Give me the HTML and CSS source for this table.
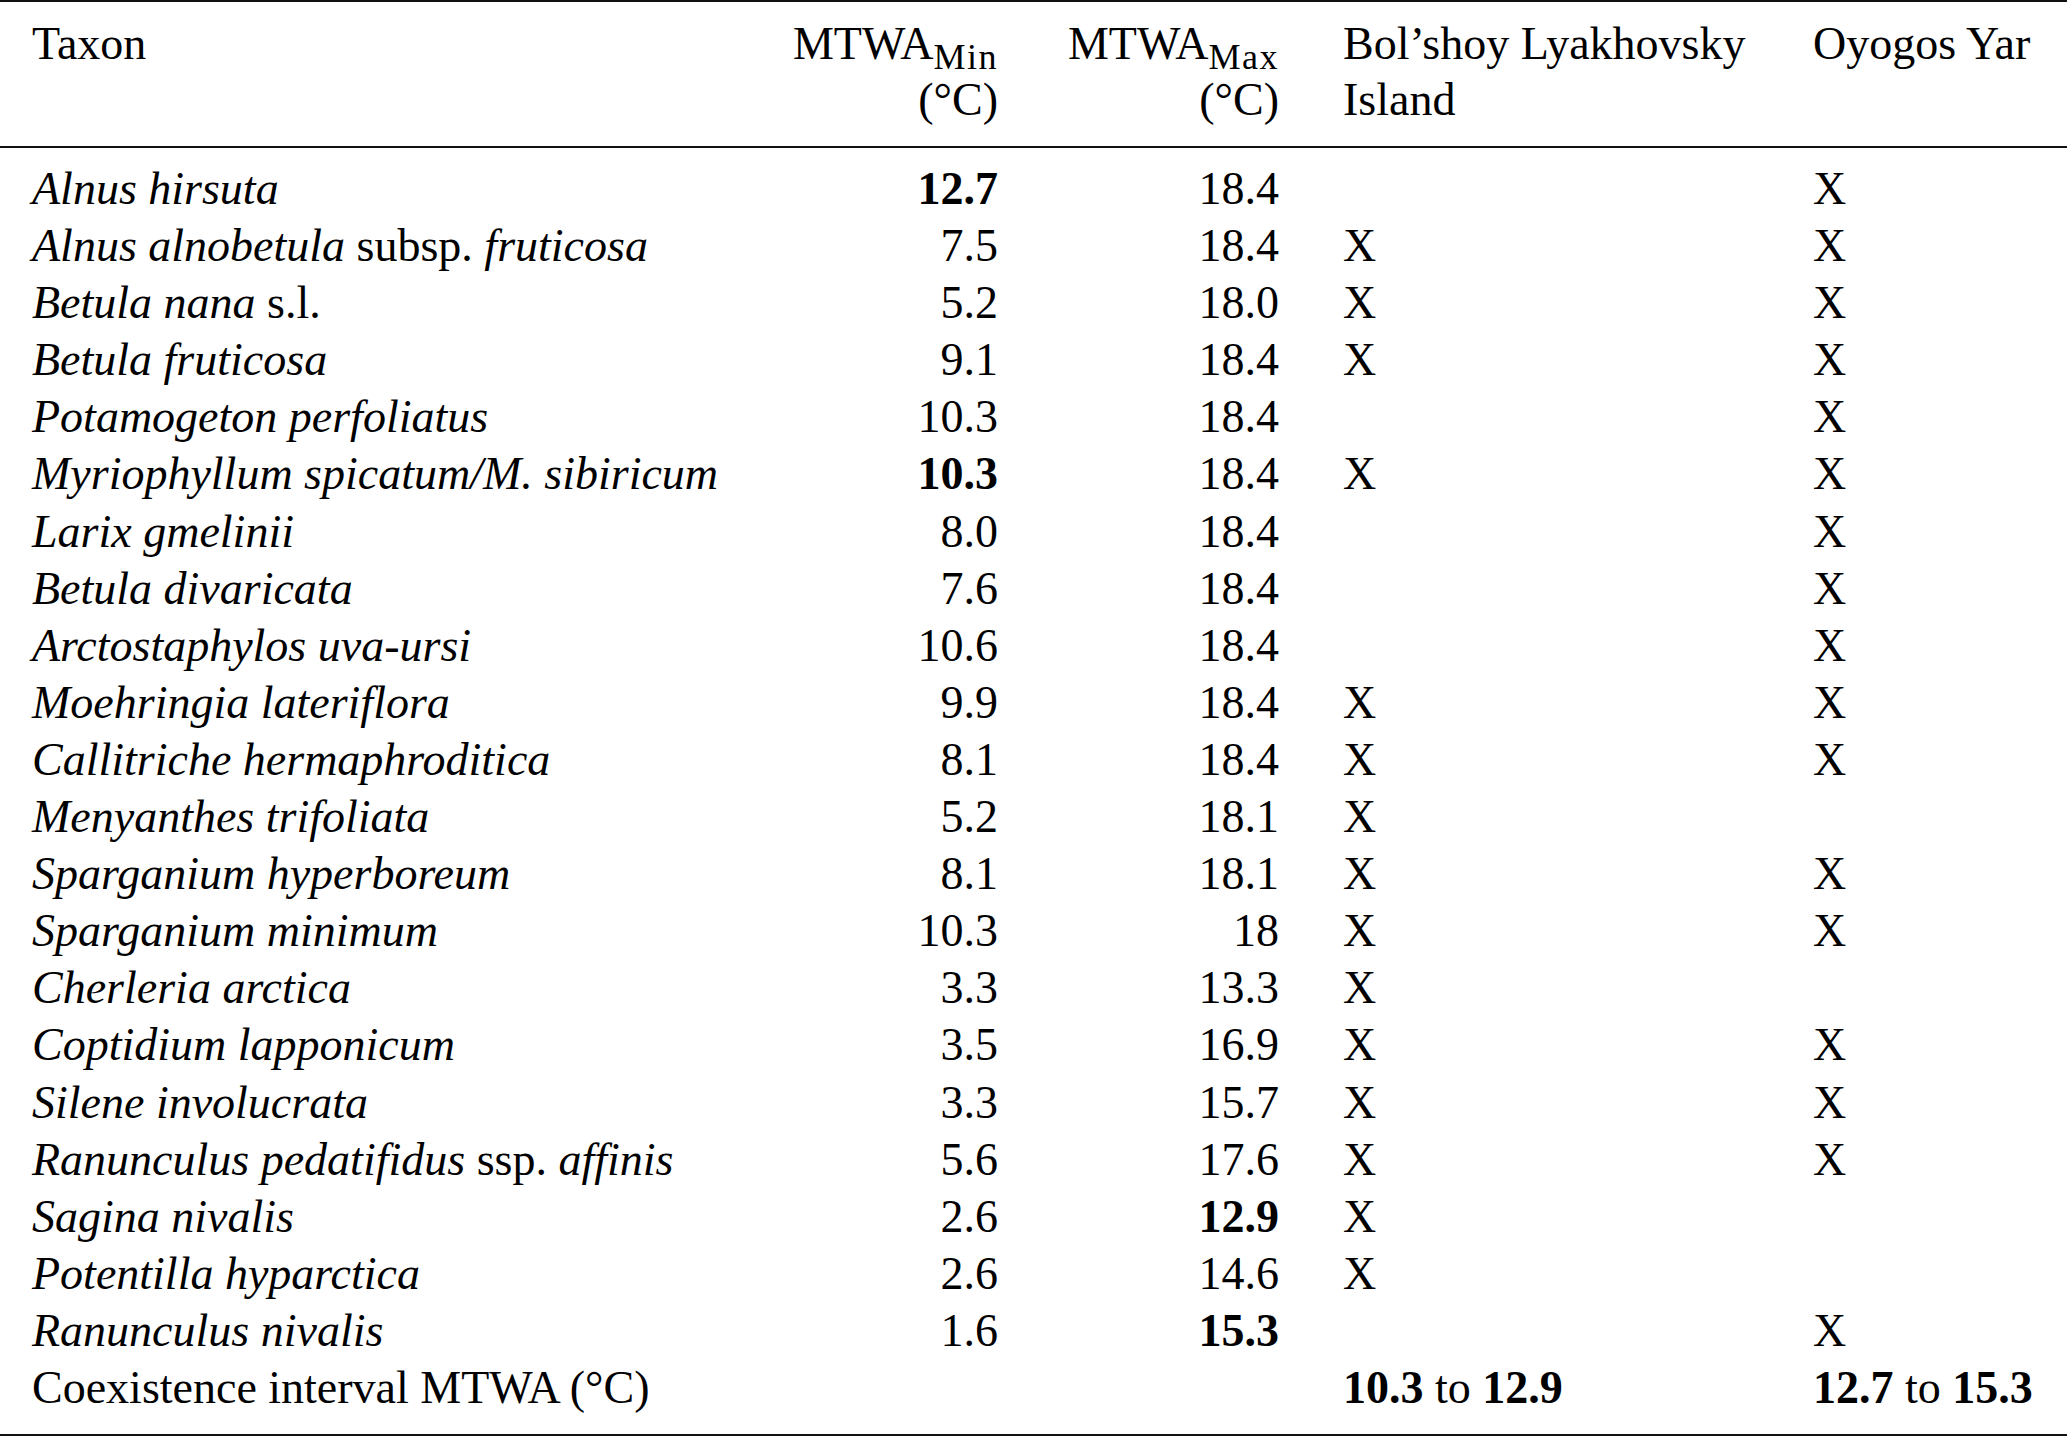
FILE: index.html
```html
<!DOCTYPE html>
<html lang="en">
<head>
<meta charset="utf-8">
<title>MTWA coexistence table</title>
<link rel="stylesheet" href="styles.css">
</head>
<body>
<table class="taxa">
  <colgroup>
    <col class="c-taxon">
    <col class="c-min">
    <col class="c-max">
    <col class="c-bol">
    <col class="c-oyo">
  </colgroup>
  <thead>
    <tr>
      <th class="l">Taxon</th>
      <th class="r">MTWA<span class="sub">Min</span><br>(°C)</th>
      <th class="r">MTWA<span class="sub">Max</span><br>(°C)</th>
      <th class="l">Bol’shoy Lyakhovsky<br>Island</th>
      <th class="l">Oyogos Yar</th>
    </tr>
  </thead>
  <tbody>
    <tr><td><i>Alnus hirsuta</i></td><td class="r"><b>12.7</b></td><td class="r">18.4</td><td></td><td>X</td></tr>
    <tr><td><i>Alnus alnobetula</i> subsp. <i>fruticosa</i></td><td class="r">7.5</td><td class="r">18.4</td><td>X</td><td>X</td></tr>
    <tr><td><i>Betula nana</i> s.l.</td><td class="r">5.2</td><td class="r">18.0</td><td>X</td><td>X</td></tr>
    <tr><td><i>Betula fruticosa</i></td><td class="r">9.1</td><td class="r">18.4</td><td>X</td><td>X</td></tr>
    <tr><td><i>Potamogeton perfoliatus</i></td><td class="r">10.3</td><td class="r">18.4</td><td></td><td>X</td></tr>
    <tr><td><i>Myriophyllum spicatum/M. sibiricum</i></td><td class="r"><b>10.3</b></td><td class="r">18.4</td><td>X</td><td>X</td></tr>
    <tr><td><i>Larix gmelinii</i></td><td class="r">8.0</td><td class="r">18.4</td><td></td><td>X</td></tr>
    <tr><td><i>Betula divaricata</i></td><td class="r">7.6</td><td class="r">18.4</td><td></td><td>X</td></tr>
    <tr><td><i>Arctostaphylos uva-ursi</i></td><td class="r">10.6</td><td class="r">18.4</td><td></td><td>X</td></tr>
    <tr><td><i>Moehringia lateriflora</i></td><td class="r">9.9</td><td class="r">18.4</td><td>X</td><td>X</td></tr>
    <tr><td><i>Callitriche hermaphroditica</i></td><td class="r">8.1</td><td class="r">18.4</td><td>X</td><td>X</td></tr>
    <tr><td><i>Menyanthes trifoliata</i></td><td class="r">5.2</td><td class="r">18.1</td><td>X</td><td></td></tr>
    <tr><td><i>Sparganium hyperboreum</i></td><td class="r">8.1</td><td class="r">18.1</td><td>X</td><td>X</td></tr>
    <tr><td><i>Sparganium minimum</i></td><td class="r">10.3</td><td class="r">18</td><td>X</td><td>X</td></tr>
    <tr><td><i>Cherleria arctica</i></td><td class="r">3.3</td><td class="r">13.3</td><td>X</td><td></td></tr>
    <tr><td><i>Coptidium lapponicum</i></td><td class="r">3.5</td><td class="r">16.9</td><td>X</td><td>X</td></tr>
    <tr><td><i>Silene involucrata</i></td><td class="r">3.3</td><td class="r">15.7</td><td>X</td><td>X</td></tr>
    <tr><td><i>Ranunculus pedatifidus</i> ssp. <i>affinis</i></td><td class="r">5.6</td><td class="r">17.6</td><td>X</td><td>X</td></tr>
    <tr><td><i>Sagina nivalis</i></td><td class="r">2.6</td><td class="r"><b>12.9</b></td><td>X</td><td></td></tr>
    <tr><td><i>Potentilla hyparctica</i></td><td class="r">2.6</td><td class="r">14.6</td><td>X</td><td></td></tr>
    <tr><td><i>Ranunculus nivalis</i></td><td class="r">1.6</td><td class="r"><b>15.3</b></td><td></td><td>X</td></tr>
    <tr class="last"><td>Coexistence interval MTWA (°C)</td><td></td><td></td><td><b>10.3</b> to <b>12.9</b></td><td><b>12.7</b> to <b>15.3</b></td></tr>
  </tbody>
</table>
</body>
</html>
```
FILE: styles.css
```css
html, body {
  margin: 0;
  padding: 0;
  background: #fff;
}

body {
  font-family: "Liberation Serif", "Times New Roman", serif;
  font-size: 46px;
  color: #000;
}

.taxa {
  width: 2067px;
  table-layout: fixed;
  border-collapse: separate;
  border-spacing: 0;
}

.c-taxon { width: 759px; }
.c-min { width: 271px; }
.c-max { width: 281px; }
.c-bol { width: 470px; }
.c-oyo { width: 286px; }

.taxa th,
.taxa td {
  padding: 0 32px;
  white-space: nowrap;
  text-align: left;
  vertical-align: top;
}

.taxa th {
  font-weight: normal;
  line-height: 56px;
  padding-top: 14px;
  padding-bottom: 18px;
  border-top: 2px solid #111;
  border-bottom: 2px solid #111;
}

.taxa td {
  line-height: 57.1px;
}

.taxa tbody tr:first-child td {
  padding-top: 12px;
}

.taxa tr.last td {
  padding-bottom: 18px;
  border-bottom: 2px solid #111;
}

.taxa .r {
  text-align: right;
}

.sub {
  font-size: 36px;
  letter-spacing: 1.5px;
  line-height: 0;
  vertical-align: -10px;
}

b {
  font-weight: bold;
}
```
